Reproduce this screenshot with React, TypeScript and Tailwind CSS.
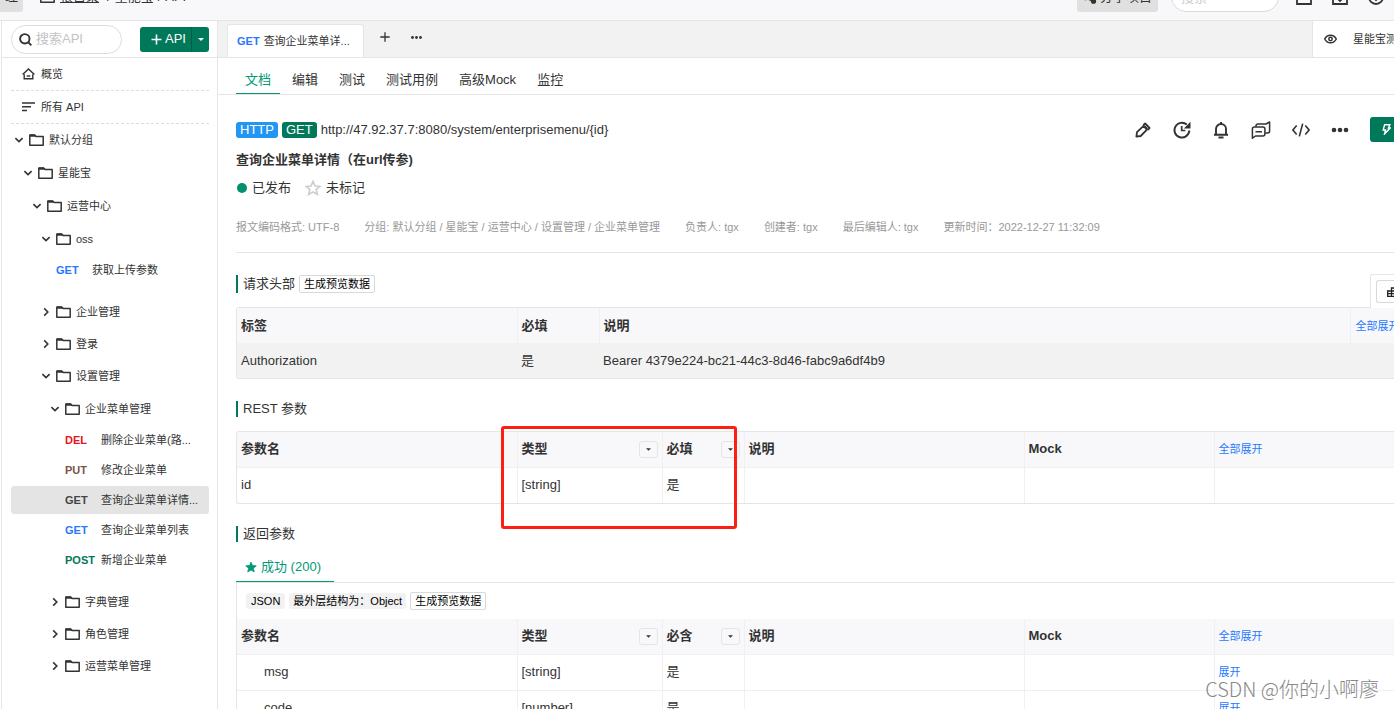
import type { ReactNode } from "react";
import clsx from "clsx";

type TreeLeaf = { method: string; name: string; active?: boolean };
type TreeFolder = { name: string; open?: boolean; folders?: TreeFolder[]; apis?: TreeLeaf[] };

type ParamRow = { name: string; type: string; required: string; action?: string };

const tree: TreeFolder[] = [
  {
    name: "默认分组",
    open: true,
    folders: [
      {
        name: "星能宝",
        open: true,
        folders: [
          {
            name: "运营中心",
            open: true,
            folders: [
              { name: "oss", open: true, apis: [{ method: "GET", name: "获取上传参数" }] },
              { name: "企业管理" },
              { name: "登录" },
              {
                name: "设置管理",
                open: true,
                folders: [
                  {
                    name: "企业菜单管理",
                    open: true,
                    apis: [
                      { method: "DEL", name: "删除企业菜单(路..." },
                      { method: "PUT", name: "修改企业菜单" },
                      { method: "GET", name: "查询企业菜单详情...", active: true },
                      { method: "GET", name: "查询企业菜单列表" },
                      { method: "POST", name: "新增企业菜单" },
                    ],
                  },
                  { name: "字典管理" },
                  { name: "角色管理" },
                  { name: "运营菜单管理" },
                ],
              },
            ],
          },
        ],
      },
    ],
  },
];

const docTabs = ["文档", "编辑", "测试", "测试用例", "高级Mock", "监控"];

const meta = [
  "报文编码格式: UTF-8",
  "分组: 默认分组 / 星能宝 / 运营中心 / 设置管理 / 企业菜单管理",
  "负责人: tgx",
  "创建者: tgx",
  "最后编辑人: tgx",
  "更新时间：2022-12-27 11:32:09",
];

const restRows: ParamRow[] = [{ name: "id", type: "[string]", required: "是" }];

const responseRows: ParamRow[] = [
  { name: "msg", type: "[string]", required: "是", action: "展开" },
  { name: "code", type: "[number]", required: "是", action: "展开" },
];

const folderIndent = ["pl-[3px]", "pl-3", "pl-[21px]", "pl-[30px]", "pl-[39px]"];
const leafIndent = ["pl-[9px]", "pl-[18px]", "pl-[27px]", "pl-9", "pl-[45px]", "pl-[54px]"];

function methodColor(method: string, active?: boolean) {
  if (active) return "text-[#444]";
  if (method === "DEL") return "text-[#e8131c]";
  if (method === "PUT") return "text-[#795548]";
  if (method === "POST") return "text-[#00785a]";
  return "text-[#2878ff]";
}

function FolderIcon({ className = "" }: { className?: string }) {
  return (
    <svg width="15" height="12" viewBox="0 0 15 12" fill="none" className={clsx("shrink-0", className)}>
      <path d="M.8 11.2V.9h4.9l1.5 1.6h7v8.7z" stroke="#333" strokeWidth="1.5" strokeLinejoin="round" />
      <path d="M1 .4h4.7l1.8 2.400H1z" fill="#333" />
    </svg>
  );
}

function Chevron({ open }: { open?: boolean }) {
  return (
    <svg width="10" height="10" viewBox="0 0 10 10" fill="none" stroke="#333" strokeWidth="1.6" className="shrink-0">
      {open ? <path d="M1.4 3.2 5 6.6l3.6-3.4" /> : <path d="M3.2 1.4 6.8 5 3.2 8.6" />}
    </svg>
  );
}

function Caret({ className }: { className: string }) {
  return (
    <svg viewBox="0 0 8 4" className={className} fill="currentColor">
      <path d="M0 0h8L4 4z" />
    </svg>
  );
}

function Star({ size, filled }: { size: number; filled?: boolean }) {
  return (
    <svg width={size} height={size} viewBox="0 0 16 16">
      <path
        d="m8 1.4 2 4.6 5 .4-3.8 3.2 1.2 4.9L8 11.9l-4.4 2.6 1.2-4.9L1 6.4l5-.4z"
        fill={filled ? "#009a75" : "none"}
        stroke={filled ? "#009a75" : "#ccc"}
        strokeWidth={filled ? 1 : 1.6}
      />
    </svg>
  );
}

function FolderNode({ folder, depth }: { folder: TreeFolder; depth: number }) {
  return (
    <li>
      <button type="button" className={clsx("flex h-8 w-full items-center gap-[5px] text-left", folderIndent[depth])}>
        <Chevron open={folder.open} />
        <FolderIcon />
        <span>{folder.name}</span>
      </button>
      {folder.folders && (
        <ul className="pt-px">
          {folder.folders.map((child) => (
            <FolderNode key={child.name} folder={child} depth={depth + 1} />
          ))}
        </ul>
      )}
      {folder.apis && (
        <ul className="pb-[11px]">
          {folder.apis.map((api) => (
            <li key={api.name} className="py-px">
              <a
                href="#"
                className={clsx(
                  "flex h-7 items-center rounded-[3px] whitespace-nowrap",
                  leafIndent[depth + 1],
                  api.active && "bg-[#e4e4e4]"
                )}
              >
                <span className={clsx("w-9 shrink-0 font-bold", methodColor(api.method, api.active))}>{api.method}</span>
                <span>{api.name}</span>
              </a>
            </li>
          ))}
        </ul>
      )}
    </li>
  );
}

function TopBar() {
  return (
    <header className="flex h-[21px] flex-col justify-end overflow-hidden border-b border-[#e5e5e5] bg-[#f8f8fa]">
      <div className="mb-2 flex h-[30px] shrink-0 items-center">
        <button type="button" className="flex h-[30px] w-[23px] items-center justify-center overflow-hidden rounded-r-[3px] bg-[#e0e0e0]">
          理
        </button>
        <FolderIcon className="ml-[17px]" />
        <nav className="ml-[5px] flex gap-1 whitespace-nowrap">
          <a href="#" className="underline">
            根目录
          </a>
          <span className="ml-1">/</span>
          <a href="#">星能宝</a>
          <span>/</span>
          <span>API</span>
        </nav>
        <button type="button" className="ml-auto flex h-[30px] items-center gap-[3px] rounded-[3px] bg-[#e0e0e0] px-[6px] whitespace-nowrap">
          <svg width="14" height="14" viewBox="0 0 14 14" fill="#333">
            <circle cx="2.5" cy="8" r="2.2" />
            <circle cx="11" cy="2.5" r="2.2" />
            <circle cx="10.5" cy="11.2" r="2.6" />
            <path d="M2.5 8 11 2.500M2.500 8l8 3.2" stroke="#333" strokeWidth="1.5" />
          </svg>
          分享项目
        </button>
        <input
          type="search"
          aria-label="搜索"
          placeholder="搜索"
          className="ml-[13px] h-[30px] w-[108px] rounded-full border border-[#d9d9d9] bg-white px-[9px] text-[13px] placeholder:text-[#ccc]"
        />
        <div className="mr-[10px] ml-[17px] flex items-center gap-5">
          <svg width="16" height="16" viewBox="0 0 16 16" fill="none" stroke="#333" strokeWidth="1.8">
            <path d="M1 1h14v14H1zM5 8h6" />
          </svg>
          <svg width="16" height="16" viewBox="0 0 16 16" fill="none" stroke="#333" strokeWidth="1.8">
            <path d="M1 1h14v14H1zM5 9l3 3 3-3M8 4v8" />
          </svg>
          <svg width="16" height="16" viewBox="0 0 16 16" fill="none" stroke="#333" strokeWidth="1.8">
            <circle cx="8" cy="8" r="7" />
            <path d="M8 4v8" />
          </svg>
        </div>
      </div>
    </header>
  );
}

function Sidebar() {
  return (
    <aside className="w-[216px] shrink-0 overflow-hidden border-r border-[#e5e5e5] text-[11px]">
      <div className="flex h-[37px] items-center justify-between border-b border-[#e5e5e5] pr-2 pl-[9px] text-[13px]">
        <label className="flex h-[29px] w-[111px] items-center gap-1 rounded-full border border-[#ddd] pl-[7px]">
          <svg width="13" height="13" viewBox="0 0 13 13" fill="none" stroke="#333" strokeWidth="1.9" className="shrink-0">
            <circle cx="5.8" cy="5.8" r="4.7" />
            <path d="m9 9 3.300 3.300" />
          </svg>
          <input aria-label="搜索API" placeholder="搜索API" className="w-full min-w-0 outline-none placeholder:text-[#c4c4c4]" />
        </label>
        <div className="flex h-[25px] overflow-hidden rounded-[3px] bg-[#00785a] text-white">
          <button type="button" className="flex items-center gap-[3px] border-r border-[#006048] pr-[5px] pl-[11px]">
            <svg width="11" height="11" viewBox="0 0 11 11" stroke="#fff" strokeWidth="1.6">
              <path d="M5.500.5v10M.5 5.500h10" />
            </svg>
            API
          </button>
          <button type="button" aria-label="更多" className="flex w-[17px] items-center justify-center">
            <Caret className="h-[3px] w-[6px]" />
          </button>
        </div>
      </div>
      <nav className="pr-2 pl-[9px]">
        <a href="#" className="flex h-[33px] items-center gap-[6px] border-b border-dashed border-[#ddd] pl-[11px]">
          <svg width="13" height="12" viewBox="0 0 13 12" fill="none" stroke="#333" strokeWidth="1.4">
            <path d="M2.2 6.300v4.500h8.600V6.300" />
            <path d="M.6 6.600 6.500 1l5.900 5.600" />
            <path d="M4.700 8h3.600" />
          </svg>
          概览
        </a>
        <a href="#" className="flex h-[33px] items-center gap-[6px] border-b border-dashed border-[#ddd] pl-[11px]">
          <svg width="13" height="10" viewBox="0 0 13 10" stroke="#333" strokeWidth="1.6">
            <path d="M0 1h13M0 4.800h9M0 8.500h5" />
          </svg>
          所有 API
        </a>
        <ul>
          {tree.map((folder) => (
            <FolderNode key={folder.name} folder={folder} depth={0} />
          ))}
        </ul>
      </nav>
    </aside>
  );
}

function TabBar() {
  return (
    <div className="flex h-[37px] items-end border-b border-[#e5e5e5] bg-[#f2f2f2]">
      <button
        type="button"
        className="ml-[9px] flex h-[33px] items-center gap-1 rounded-t-[3px] border border-b-0 border-[#e5e5e5] bg-white pr-[13px] pl-[9px] text-[11px] whitespace-nowrap"
      >
        <span className="font-bold text-[#2878ff]">GET</span>
        查询企业菜单详...
      </button>
      <div className="flex h-full items-center gap-[21px] pb-1 pl-4">
        <button type="button" aria-label="新建标签">
          <svg width="10" height="10" viewBox="0 0 10 10" stroke="#333" strokeWidth="1.3">
            <path d="M5 .3v9.400M.3 5h9.400" />
          </svg>
        </button>
        <button type="button" aria-label="更多标签">
          <svg width="11" height="3" viewBox="0 0 11 3" fill="#333">
            <circle cx="1.5" cy="1.5" r="1.4" />
            <circle cx="5.5" cy="1.5" r="1.4" />
            <circle cx="9.5" cy="1.5" r="1.4" />
          </svg>
        </button>
      </div>
      <button
        type="button"
        className="ml-auto flex h-full w-[82px] items-center gap-4 overflow-hidden border-l border-[#e5e5e5] bg-white pl-[11px] text-[11px] whitespace-nowrap"
      >
        <svg width="13" height="10" viewBox="0 0 13 10" fill="none" stroke="#333" strokeWidth="1.5" className="shrink-0">
          <path d="M.7 5C2 2.500 4 1.200 6.500 1.200S11 2.500 12.300 5C11 7.500 9 8.800 6.500 8.800S2 7.500.7 5z" />
          <circle cx="6.5" cy="5" r="1.7" />
        </svg>
        星能宝测
      </button>
    </div>
  );
}

function ApiActions() {
  return (
    <div className="flex items-center gap-[21px]">
      <button type="button" aria-label="编辑">
        <svg width="18" height="18" viewBox="0 0 18 18" fill="none" stroke="#333" strokeWidth="1.8">
          <path d="m2.400 15.700.6-4.500 6.600-6.400 3.600 3.600-6.500 6.600z" strokeLinejoin="round" />
          <path d="m9.200 4.400 1.900-1.900 4.500 4.500-1.900 1.900" strokeLinejoin="round" />
          <path d="m10.300 5.300 2.500 2.500" strokeWidth="2.4" />
        </svg>
      </button>
      <button type="button" aria-label="历史">
        <svg width="18" height="18" viewBox="0 0 18 18" fill="none" stroke="#333" strokeWidth="2">
          <path d="M13.800 3.600A7.400 7.400 0 1 0 16.300 9.500" />
          <path d="M8.700 5v4.500h3.600" strokeWidth="1.7" />
          <path d="M17.500.8v6.600h-6.600z" fill="#333" stroke="none" />
        </svg>
      </button>
      <button type="button" aria-label="通知">
        <svg width="18" height="18" viewBox="0 0 18 18" fill="none" stroke="#333" strokeWidth="1.9">
          <path d="M4 13.600V8a5 5 0 0 1 10 0v5.600M2 13.800h14" />
          <path d="M9 1v2M6.500 16.500h5" strokeWidth="2" />
        </svg>
      </button>
      <button type="button" aria-label="评论">
        <svg width="20" height="18" viewBox="0 0 20 18" fill="none" stroke="#333" strokeWidth="1.5">
          <path d="M1.400 17.200V8q0-2 2-2h8.500q2 0 2 2v5q0 2-2 2H4.500zM4.500 10.700h6.500" strokeLinejoin="round" />
          <path d="M5 5.800V5q0-2 2-2h8l3.600-2V10q0 2-2 2h-2.500" strokeLinejoin="round" />
        </svg>
      </button>
      <button type="button" aria-label="代码">
        <svg width="18" height="14" viewBox="0 0 18 14" fill="none" stroke="#333" strokeWidth="1.6">
          <path d="M4.700 2.500.9 7l3.800 4.500M13.300 2.500 17.100 7l-3.800 4.500M10.700.6 7.300 13.400" />
        </svg>
      </button>
      <button type="button" aria-label="更多">
        <svg width="18" height="6" viewBox="0 0 18 6" fill="#333">
          <circle cx="3" cy="3" r="2.3" />
          <circle cx="9" cy="3" r="2.3" />
          <circle cx="15" cy="3" r="2.3" />
        </svg>
      </button>
      <button type="button" aria-label="快速测试" className="flex h-[25px] w-6 items-center justify-end overflow-hidden rounded-l-[3px] bg-[#00785a] pr-[3px]">
        <svg width="9" height="11" viewBox="0 0 9 11" fill="none" stroke="#fff" strokeWidth="1.4">
          <path d="M2.600.8h5.200L6.400 4h1.800L2.500 10l1-4H1.200z" />
        </svg>
      </button>
    </div>
  );
}

function PreviewButton() {
  return (
    <button type="button" className="h-[18px] rounded-[2px] border border-[#d9d9d9] bg-white px-1 text-[11px] leading-4 text-black">
      生成预览数据
    </button>
  );
}

function SectionTitle({ title, children }: { title: string; children?: ReactNode }) {
  return (
    <div className="relative mt-[22px] mb-[14px] flex items-center gap-1">
      <h3 className="flex items-center self-stretch border-l-2 border-[#00785a] pl-[5px] leading-4">{title}</h3>
      {children}
    </div>
  );
}

function FilterButton() {
  return (
    <button type="button" aria-label="筛选" className="flex h-[17px] w-[19px] items-center justify-center rounded-[3px] border border-[#e5e5e5]">
      <Caret className="h-[3px] w-[5px]" />
    </button>
  );
}

function ParamTable({ rows, requiredLabel, indent }: { rows: ParamRow[]; requiredLabel: string; indent?: boolean }) {
  const th = "border-r border-[#f0f0f0] px-1 text-left font-bold";
  const td = "border-r border-[#f0f0f0] px-1";

  return (
    <table className="w-full table-fixed">
      <colgroup>
        <col className="w-[280px]" />
        <col className="w-[145px]" />
        <col className="w-[82px]" />
        <col className="w-[280px]" />
        <col className="w-[190px]" />
        <col />
      </colgroup>
      <thead>
        <tr className="h-[35px] border-b border-[#f0f0f0] bg-[#f8f8fa]">
          <th className={th}>参数名</th>
          <th className={th}>
            <div className="flex items-center justify-between">
              类型
              <FilterButton />
            </div>
          </th>
          <th className={th}>
            <div className="flex items-center justify-between">
              {requiredLabel}
              <FilterButton />
            </div>
          </th>
          <th className={th}>说明</th>
          <th className={th}>Mock</th>
          <th className="px-1 text-left text-[11px] font-normal">
            <a href="#" className="text-[#2878ff]">
              全部展开
            </a>
          </th>
        </tr>
      </thead>
      <tbody>
        {rows.map((row) => (
          <tr key={row.name} className="h-9 border-b border-[#f0f0f0] last:border-b-0">
            <td className={clsx(td, indent && "pl-[27px]")}>{row.name}</td>
            <td className={td}>{row.type}</td>
            <td className={td}>{row.required}</td>
            <td className={td} />
            <td className={td} />
            <td className="px-1 text-[11px]">
              {row.action && (
                <a href="#" className="text-[#2878ff]">
                  {row.action}
                </a>
              )}
            </td>
          </tr>
        ))}
      </tbody>
    </table>
  );
}

function HeaderTable() {
  return (
    <div className="rounded-l-[3px] border border-r-0 border-[#e5e5e5]">
      <table className="w-full table-fixed">
        <colgroup>
          <col className="w-[280px]" />
          <col className="w-[82px]" />
          <col />
          <col className="w-11" />
        </colgroup>
        <thead>
          <tr className="h-[35px] bg-[#f8f8fa] text-left">
            <th className="border-r border-[#f0f0f0] px-1">标签</th>
            <th className="border-r border-[#f0f0f0] px-1">必填</th>
            <th className="border-r border-[#f0f0f0] px-1">说明</th>
            <th className="overflow-hidden pl-[5px] text-[11px] font-normal whitespace-nowrap">
              <a href="#" className="text-[#2878ff]">
                全部展开
              </a>
            </th>
          </tr>
        </thead>
        <tbody>
          <tr className="h-[35px] bg-[#f2f2f2]">
            <td className="px-1">Authorization</td>
            <td className="px-1">是</td>
            <td className="px-1">Bearer 4379e224-bc21-44c3-8d46-fabc9a6df4b9</td>
            <td />
          </tr>
        </tbody>
      </table>
    </div>
  );
}

function ApiDocument() {
  return (
    <div className="pt-[22px] pl-[18px]">
      <div className="flex items-center justify-between">
        <div className="flex items-center gap-1">
          <span className="h-4 rounded-[3px] bg-[#2196f3] px-1 leading-4 text-white">HTTP</span>
          <span className="h-4 rounded-[3px] bg-[#00785a] px-1 leading-4 text-white">GET</span>
          <span>http://47.92.37.7:8080/system/enterprisemenu/&#123;id&#125;</span>
        </div>
        <ApiActions />
      </div>
      <h2 className="mt-2 leading-5 font-bold">查询企业菜单详情（在url传参)</h2>
      <div className="mt-2 flex h-5 items-center">
        <span className="mx-px size-[10px] rounded-full bg-[#00906c]" />
        <span className="ml-1">已发布</span>
        <button type="button" className="ml-[14px] flex items-center gap-[5px]">
          <Star size={16} />
          未标记
        </button>
      </div>
      <div className="mt-[19px] flex gap-[25px] border-b border-[#e5e5e5] pb-[15px] text-[11px] leading-5 whitespace-nowrap text-[#999]">
        {meta.map((item) => (
          <span key={item}>{item}</span>
        ))}
      </div>

      <SectionTitle title="请求头部">
        <PreviewButton />
        <div className="absolute -top-px right-0 flex h-[34px] w-6 items-center overflow-hidden rounded-tl-[3px] border-t border-l border-[#e5e5e5] bg-white pl-[5px]">
          <button
            type="button"
            aria-label="布局"
            className="flex h-[23px] w-5 shrink-0 items-center justify-end rounded-l-[3px] border border-r-0 border-[#d9d9d9]"
          >
            <svg width="9" height="10" viewBox="0 0 9 10" fill="none" stroke="#222" strokeWidth="1.3">
              <path d="M9 1H4.500v3M9 4H.7v5.300H9M.7 6.600H9M4.500 4v5" />
            </svg>
          </button>
        </div>
      </SectionTitle>
      <HeaderTable />

      <SectionTitle title="REST 参数" />
      <div className="relative rounded-l-[3px] border border-r-0 border-[#e5e5e5]">
        <ParamTable rows={restRows} requiredLabel="必填" />
        <div className="pointer-events-none absolute -top-[6px] left-[264px] h-[103px] w-[236px] rounded-[3px] border-[3px] border-[#ff1e12]" />
      </div>

      <SectionTitle title="返回参数" />
      <div className="flex">
        <button type="button" className="flex h-[26px] items-center gap-1 border-b border-[#009a75] pr-[13px] pb-[3px] pl-[9px] text-[#009a75]">
          <Star size={12} filled />
          成功 (200)
        </button>
      </div>
      <div className="border-t border-l border-[#e5e5e5]">
        <div className="flex h-9 items-center gap-1 pl-[9px] text-[11px] text-black">
          <span className="h-4 rounded-[3px] bg-[#f2f2f2] px-[5px] leading-4">JSON</span>
          <span className="h-4 rounded-[3px] bg-[#f2f2f2] px-1 leading-4">最外层结构为：Object</span>
          <PreviewButton />
        </div>
        <ParamTable rows={responseRows} requiredLabel="必含" indent />
      </div>
    </div>
  );
}

export default function App() {
  return (
    <div className="relative flex h-screen flex-col overflow-hidden bg-white font-['Liberation_Sans','Noto_Sans_CJK_SC',sans-serif] text-[13px] leading-5 text-[#333]">
      <TopBar />
      <div className="ml-px flex min-h-0 flex-1 border-l border-[#e5e5e5]">
        <Sidebar />
        <main className="min-w-0 flex-1 overflow-hidden">
          <TabBar />
          <nav className="flex h-[37px] gap-[3px] border-b border-[#e5e5e5] pl-[18px]">
            {docTabs.map((tab, index) => (
              <a
                key={tab}
                href="#"
                className={clsx(
                  "flex items-center border-b px-[9px] pt-2 whitespace-nowrap",
                  index === 0 ? "border-[#009a75] text-[#009a75]" : "border-transparent"
                )}
              >
                {tab}
              </a>
            ))}
          </nav>
          <ApiDocument />
        </main>
      </div>
      <div className="pointer-events-none absolute right-[15px] bottom-2 font-['Noto_Sans_CJK_SC',sans-serif] text-[20px] leading-6 font-light text-[#888]">
        CSDN @你的小啊廖
      </div>
    </div>
  );
}
